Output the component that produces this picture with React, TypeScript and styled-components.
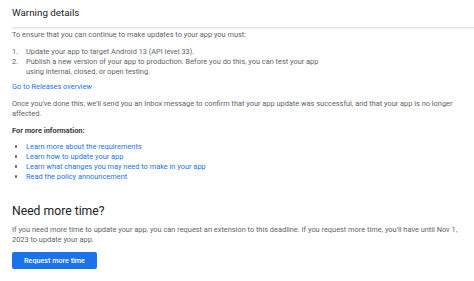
import React from "react";
import styled, { createGlobalStyle } from "styled-components";

const GlobalStyle = createGlobalStyle`
  html, body {
    margin: 0;
    padding: 0;
    background: #ffffff;
  }
  body {
    font-family: Roboto, "Liberation Sans", Arial, sans-serif;
    -webkit-font-smoothing: antialiased;
  }
`;

const Page = styled.div`
  width: 474px;
  height: 281px;
  overflow: hidden;
  background: #fff;
`;

const Header = styled.header`
  margin-left: 12px;
  padding: 6px 0 8px;
  border-bottom: 1px solid #e3e3e3;
  box-shadow: 0 1px 1px rgba(0, 0, 0, 0.05);
`;

const Title = styled.h1`
  margin: 0;
  font-size: 9.8px;
  line-height: 13px;
  font-weight: 400;
  color: #202124;
`;

const Body = styled.section`
  padding: 1.5px 12px 0;
  width: 450px;
`;

const Text = styled.p<{ $gap?: number }>`
  margin: ${(p) => p.$gap ?? 0}px 0 0;
  font-size: 7.4px;
  line-height: 10px;
  color: #5f6368;
`;

const Strong = styled(Text)`
  font-weight: 700;
  color: #3c4043;
`;

const Link = styled.a<{ $gap?: number }>`
  display: block;
  margin-top: ${(p) => p.$gap ?? 0}px;
  font-size: 7.4px;
  line-height: 10px;
  color: #1a73e8;
  text-decoration: none;
`;

const List = styled.ul<{ $gap?: number }>`
  list-style: none;
  margin: ${(p) => p.$gap ?? 0}px 0 0;
  padding: 0;
`;

const Item = styled.li<{ $link?: boolean }>`
  display: flex;
  font-size: 7.4px;
  line-height: 10px;
  color: ${(p) => (p.$link ? "#1a73e8" : "#5f6368")};
`;

const ItemText = styled.span`
  max-width: 298px;
`;

const Marker = styled.span`
  flex: 0 0 14px;
  color: #5f6368;
`;

const Dot = styled.span`
  flex: 0 0 14px;
  display: flex;
  align-items: center;
  &::before {
    content: "";
    width: 2.5px;
    height: 2.5px;
    margin-left: 2.5px;
    border-radius: 50%;
    background: #5f6368;
  }
`;

const Heading = styled.h2`
  margin: 22px 0 0;
  font-size: 12.2px;
  line-height: 15px;
  font-weight: 400;
  color: #202124;
`;

const Button = styled.button`
  margin-top: 7px;
  width: 85px;
  height: 17px;
  border: none;
  border-radius: 2px;
  background: #1a73e8;
  color: #fff;
  font-family: inherit;
  font-size: 7.2px;
  font-weight: 500;
  padding: 0;
  cursor: pointer;
`;

const steps = [
  "Update your app to target Android 13 (API level 33).",
  "Publish a new version of your app to production. Before you do this, you can test your app using internal, closed, or open testing.",
];

const links = [
  "Learn more about the requirements",
  "Learn how to update your app",
  "Learn what changes you may need to make in your app",
  "Read the policy announcement",
];

export default function App() {
  return (
    <Page>
      <GlobalStyle />
      <Header>
        <Title>Warning details</Title>
      </Header>
      <Body>
        <Text>To ensure that you can continue to make updates to your app you must:</Text>
        <List as="ol" $gap={7}>
          {steps.map((s, i) => (
            <Item key={i}>
              <Marker>{i + 1}.</Marker>
              <ItemText>{s}</ItemText>
            </Item>
          ))}
        </List>
        <Link href="#" $gap={5.5}>
          Go to Releases overview
        </Link>
        <Text $gap={7}>
          Once you've done this, we'll send you an Inbox message to confirm that your app update was
          successful, and that your app is no longer affected.
        </Text>
        <Strong $gap={7}>For more information:</Strong>
        <List $gap={5.5}>
          {links.map((l) => (
            <Item key={l} $link>
              <Dot />
              <span>{l}</span>
            </Item>
          ))}
        </List>
        <Heading>Need more time?</Heading>
        <Text $gap={6.3}>
          If you need more time to update your app, you can request an extension to this deadline. If
          you request more time, you'll have until Nov 1, 2023 to update your app.
        </Text>
        <Button>Request more time</Button>
      </Body>
    </Page>
  );
}
